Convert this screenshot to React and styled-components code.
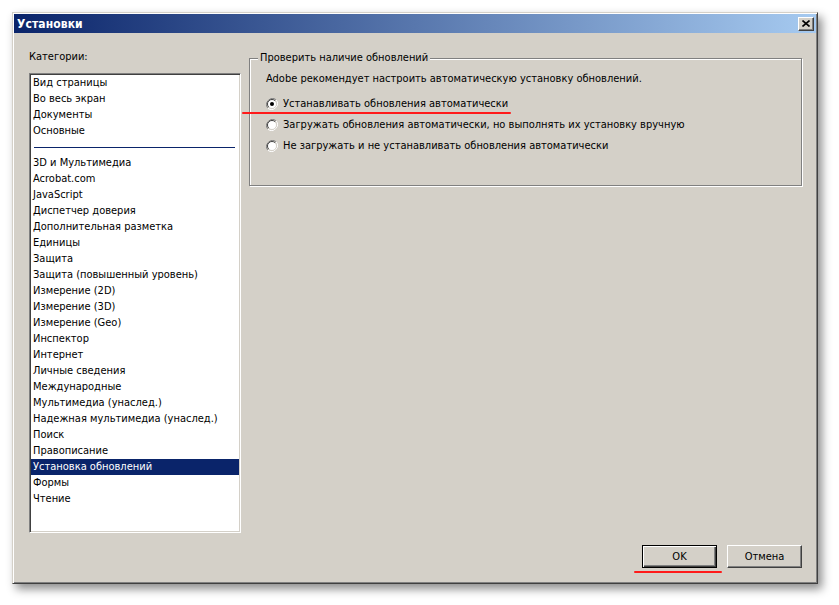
import React from 'react';
import styled, { createGlobalStyle, css } from 'styled-components';

const colors = {
  face: '#d4d0c8',
  shadow: '#808080',
  dark: '#404040',
  light: '#ffffff',
  navy: '#0a246a',
  mark: '#ff1a1a',
};

const font = `"DejaVu Sans Condensed", "Liberation Sans", Arial, sans-serif`;

const GlobalStyle = createGlobalStyle`
  html, body {
    margin: 0;
    background: #ffffff;
  }
  body {
    font-family: ${font};
    font-size: 11px;
    color: #000;
  }
`;

const Page = styled.div`
  padding: 12px 0 0 12px;
  height: 605px;
  box-sizing: border-box;
`;

const Window = styled.div`
  width: 806px;
  height: 572px;
  box-sizing: border-box;
  display: flex;
  flex-direction: column;
  background: ${colors.face};
  border: 1px solid;
  border-color: ${colors.face} ${colors.dark} ${colors.dark} ${colors.face};
  box-shadow:
    inset 1px 1px 0 ${colors.light},
    inset -1px -1px 0 ${colors.shadow},
    4px 5px 9px rgba(0, 0, 0, 0.45);
`;

const TitleBar = styled.div`
  margin: 1px 1px 0 1px;
  height: 19px;
  display: flex;
  align-items: center;
  justify-content: space-between;
  padding: 0 2px 0 3px;
  background: linear-gradient(to right, ${colors.navy}, #a6caf0);
`;

const Title = styled.span`
  color: #fff;
  font-weight: bold;
  font-size: 12px;
  letter-spacing: 0.1px;
`;

const CloseButton = styled.button`
  width: 16px;
  height: 14px;
  padding: 0;
  display: flex;
  align-items: center;
  justify-content: center;
  background: ${colors.face};
  border: 1px solid;
  border-color: ${colors.light} ${colors.dark} ${colors.dark} ${colors.light};
  box-shadow: inset -1px -1px 0 ${colors.shadow};
`;

const Body = styled.div`
  flex: 1;
  display: flex;
  flex-direction: column;
  padding: 16px 15px 15px 16px;
`;

const Columns = styled.div`
  display: grid;
  grid-template-columns: 212px 1fr;
  column-gap: 8px;
  align-items: start;
`;

const Side = styled.div`
  display: flex;
  flex-direction: column;
  gap: 8px;
`;

const Label = styled.div`
  line-height: 16px;
`;

const ListBox = styled.ul`
  margin: 0;
  list-style: none;
  height: 460px;
  box-sizing: border-box;
  background: #fff;
  border: 1px solid;
  border-color: ${colors.shadow} ${colors.light} ${colors.light} ${colors.shadow};
  box-shadow: inset 1px 1px 0 ${colors.dark}, inset -1px -1px 0 ${colors.face};
  padding: 1px;
`;

const Item = styled.li`
  height: 16px;
  line-height: 16px;
  padding-left: 2px;
  white-space: nowrap;
  ${p => p.selected && css`
    background: ${colors.navy};
    color: #fff;
  `}
`;

const Separator = styled.li`
  height: 16px;
  display: flex;
  align-items: center;
  padding: 0 4px 0 3px;
  &::after {
    content: '';
    flex: 1;
    height: 1px;
    background: ${colors.navy};
  }
`;

const Group = styled.fieldset`
  margin: 1px 0 0 0;
  padding: 5px 16px 29px 16px;
  border: 1px solid ${colors.shadow};
  box-shadow: inset 1px 1px 0 ${colors.light}, 1px 1px 0 ${colors.light};
  min-width: 0;
`;

const Legend = styled.legend`
  margin-left: -8px;
  padding: 0 2px;
  line-height: 16px;
  background: ${colors.face};
`;

const Hint = styled.div`
  line-height: 16px;
  margin-bottom: 6px;
`;

const OptionRow = styled.label`
  height: 21px;
  display: flex;
  align-items: center;
`;

const OptionInner = styled.span`
  position: relative;
  display: inline-flex;
  align-items: center;
  gap: 5px;
  ${p => p.marked && css`
    &::after {
      content: '';
      position: absolute;
      left: -24px;
      right: -3px;
      bottom: -4px;
      height: 2px;
      border-radius: 1px;
      background: ${colors.mark};
    }
  `}
`;

const Footer = styled.div`
  margin-top: auto;
  display: flex;
  justify-content: flex-end;
  gap: 10px;
`;

const Button = styled.button`
  position: relative;
  width: 75px;
  height: 23px;
  padding: 0;
  font-family: ${font};
  font-size: 11px;
  color: #000;
  background: ${colors.face};
  border: 1px solid;
  border-color: ${colors.light} ${colors.dark} ${colors.dark} ${colors.light};
  box-shadow: inset -1px -1px 0 ${colors.shadow};
  ${p => p.primary && css`
    border: 1px solid #000;
    box-shadow:
      inset 1px 1px 0 ${colors.light},
      inset -1px -1px 0 ${colors.dark},
      inset -2px -2px 0 ${colors.shadow};
  `}
  ${p => p.marked && css`
    &::after {
      content: '';
      position: absolute;
      left: -9px;
      right: -6px;
      bottom: -6px;
      height: 2px;
      border-radius: 1px;
      background: ${colors.mark};
    }
  `}
`;

const Radio = ({ checked }) => (
  <svg width="12" height="12" viewBox="0 0 12 12">
    <path d="M10.2 1.8 A6 6 0 0 0 1.8 10.2" fill="none" stroke={colors.shadow} strokeWidth="1" />
    <path d="M1.8 10.2 A6 6 0 0 0 10.2 1.8" fill="none" stroke={colors.light} strokeWidth="1" />
    <circle cx="6" cy="6" r="4.5" fill="#fff" />
    <path d="M9.2 2.8 A4.5 4.5 0 0 0 2.8 9.2" fill="none" stroke={colors.dark} strokeWidth="1" />
    <path d="M2.8 9.2 A4.5 4.5 0 0 0 9.2 2.8" fill="none" stroke={colors.face} strokeWidth="1" />
    {checked && <circle cx="6" cy="6" r="2" fill="#000" />}
  </svg>
);

const CloseIcon = () => (
  <svg width="8" height="7" viewBox="0 0 8 7">
    <path d="M0.5 0.5 L7.5 6.5 M7.5 0.5 L0.5 6.5" stroke="#000" strokeWidth="1.6" />
  </svg>
);

const topItems = ['Вид страницы', 'Во весь экран', 'Документы', 'Основные'];

const otherItems = [
  '3D и Мультимедиа',
  'Acrobat.com',
  'JavaScript',
  'Диспетчер доверия',
  'Дополнительная разметка',
  'Единицы',
  'Защита',
  'Защита (повышенный уровень)',
  'Измерение (2D)',
  'Измерение (3D)',
  'Измерение (Geo)',
  'Инспектор',
  'Интернет',
  'Личные сведения',
  'Международные',
  'Мультимедиа (унаслед.)',
  'Надежная мультимедиа (унаслед.)',
  'Поиск',
  'Правописание',
  'Установка обновлений',
  'Формы',
  'Чтение',
];

const options = [
  { text: 'Устанавливать обновления автоматически', checked: true },
  { text: 'Загружать обновления автоматически, но выполнять их установку вручную' },
  { text: 'Не загружать и не устанавливать обновления автоматически' },
];

const selected = 'Установка обновлений';

export default function App() {
  return (
    <Page>
      <GlobalStyle />
      <Window>
        <TitleBar>
          <Title>Установки</Title>
          <CloseButton aria-label="Закрыть">
            <CloseIcon />
          </CloseButton>
        </TitleBar>
        <Body>
          <Columns>
            <Side>
              <Label>Категории:</Label>
              <ListBox>
                {topItems.map(item => (
                  <Item key={item} selected={item === selected}>{item}</Item>
                ))}
                <Separator />
                {otherItems.map(item => (
                  <Item key={item} selected={item === selected}>{item}</Item>
                ))}
              </ListBox>
            </Side>
            <Group>
              <Legend>Проверить наличие обновлений</Legend>
              <Hint>Adobe рекомендует настроить автоматическую установку обновлений.</Hint>
              {options.map(opt => (
                <OptionRow key={opt.text}>
                  <OptionInner marked={opt.checked}>
                    <Radio checked={opt.checked} />
                    {opt.text}
                  </OptionInner>
                </OptionRow>
              ))}
            </Group>
          </Columns>
          <Footer>
            <Button primary marked>OK</Button>
            <Button>Отмена</Button>
          </Footer>
        </Body>
      </Window>
    </Page>
  );
}
